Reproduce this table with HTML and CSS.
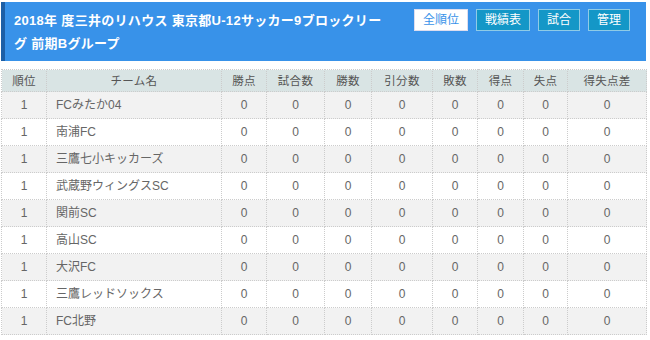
FILE: index.html
```html
<!DOCTYPE html>
<html lang="ja">
<head>
<meta charset="utf-8">
<link rel="stylesheet" href="styles.css">
</head>
<body>
<div class="page">
  <div class="head">
    <h1 class="title">2018年 度三井のリハウス 東京都U-12サッカー9ブロックリーグ 前期Bグループ</h1>
    <div class="btns">
      <a class="btn btn-active">全順位</a>
      <a class="btn">戦績表</a>
      <a class="btn">試合</a>
      <a class="btn">管理</a>
    </div>
  </div>
  <table class="rank">
    <colgroup>
      <col class="c45"><col class="c175"><col class="c45"><col class="c58"><col class="c47"><col class="c61"><col class="c45"><col class="c46"><col class="c44"><col class="c79">
    </colgroup>
    <thead>
      <tr><th>順位</th><th>チーム名</th><th>勝点</th><th>試合数</th><th>勝数</th><th>引分数</th><th>敗数</th><th>得点</th><th>失点</th><th>得失点差</th></tr>
    </thead>
    <tbody>
      <tr><td>1</td><td class="team">FCみたか04</td><td>0</td><td>0</td><td>0</td><td>0</td><td>0</td><td>0</td><td>0</td><td>0</td></tr>
      <tr><td>1</td><td class="team">南浦FC</td><td>0</td><td>0</td><td>0</td><td>0</td><td>0</td><td>0</td><td>0</td><td>0</td></tr>
      <tr><td>1</td><td class="team">三鷹七小キッカーズ</td><td>0</td><td>0</td><td>0</td><td>0</td><td>0</td><td>0</td><td>0</td><td>0</td></tr>
      <tr><td>1</td><td class="team">武蔵野ウィングスSC</td><td>0</td><td>0</td><td>0</td><td>0</td><td>0</td><td>0</td><td>0</td><td>0</td></tr>
      <tr><td>1</td><td class="team">関前SC</td><td>0</td><td>0</td><td>0</td><td>0</td><td>0</td><td>0</td><td>0</td><td>0</td></tr>
      <tr><td>1</td><td class="team">高山SC</td><td>0</td><td>0</td><td>0</td><td>0</td><td>0</td><td>0</td><td>0</td><td>0</td></tr>
      <tr><td>1</td><td class="team">大沢FC</td><td>0</td><td>0</td><td>0</td><td>0</td><td>0</td><td>0</td><td>0</td><td>0</td></tr>
      <tr><td>1</td><td class="team">三鷹レッドソックス</td><td>0</td><td>0</td><td>0</td><td>0</td><td>0</td><td>0</td><td>0</td><td>0</td></tr>
      <tr><td>1</td><td class="team">FC北野</td><td>0</td><td>0</td><td>0</td><td>0</td><td>0</td><td>0</td><td>0</td><td>0</td></tr>
    </tbody>
  </table>
</div>
</body>
</html>
```

FILE: styles.css
```css
html, body {
  margin: 0;
  padding: 0;
  background: #fff;
}
body {
  font-family: "Liberation Sans", "Noto Sans CJK JP", sans-serif;
  color: #666;
}
.page {
  padding: 2px 4px 0 1px;
}
.head {
  display: flex;
  align-items: flex-start;
  background: #3892e9;
  border-left: 4px solid #1d5fa6;
  height: 59px;
  box-sizing: border-box;
  padding: 7px 16px 0 9px;
}
.title {
  margin: 0;
  width: 376px;
  font-size: 13px;
  font-weight: bold;
  line-height: 23px;
  letter-spacing: 0.3px;
  color: #fff;
}
.btns {
  margin-left: auto;
  display: flex;
  gap: 8px;
}
.btn {
  display: block;
  height: 22px;
  box-sizing: border-box;
  padding: 0 8px;
  line-height: 20px;
  font-size: 12px;
  color: #fff;
  background: #1497c7;
  border: 1px solid #8fcbe6;
}
.btn-active {
  background: #fff;
  color: #3892e9;
  border-color: #dde;
}
.rank {
  margin-top: 8px;
  width: 645px;
  table-layout: fixed;
  border-collapse: collapse;
  font-size: 12px;
}
.c45 { width: 45px; }
.c175 { width: 175px; }
.c58 { width: 58px; }
.c47 { width: 47px; }
.c61 { width: 61px; }
.c46 { width: 46px; }
.c44 { width: 44px; }
.c79 { width: 79px; }
.rank thead tr {
  height: 22px;
}
.rank tbody tr {
  height: 27px;
}
.rank th {
  background: #d9e4e4;
  color: #555;
  font-size: 11.5px;
  letter-spacing: 0.3px;
  font-weight: normal;
  padding: 0;
  line-height: 14px;
  text-align: center;
  border: 1px dotted #ccc;
}
.rank td {
  padding: 0;
  line-height: 14px;
  text-align: center;
  color: #666;
  border: 1px dotted #ccc;
}
.rank tbody tr:nth-child(odd) td {
  background: #f2f2f2;
}
.rank td.team {
  text-align: left;
  padding-left: 9px;
}
```
